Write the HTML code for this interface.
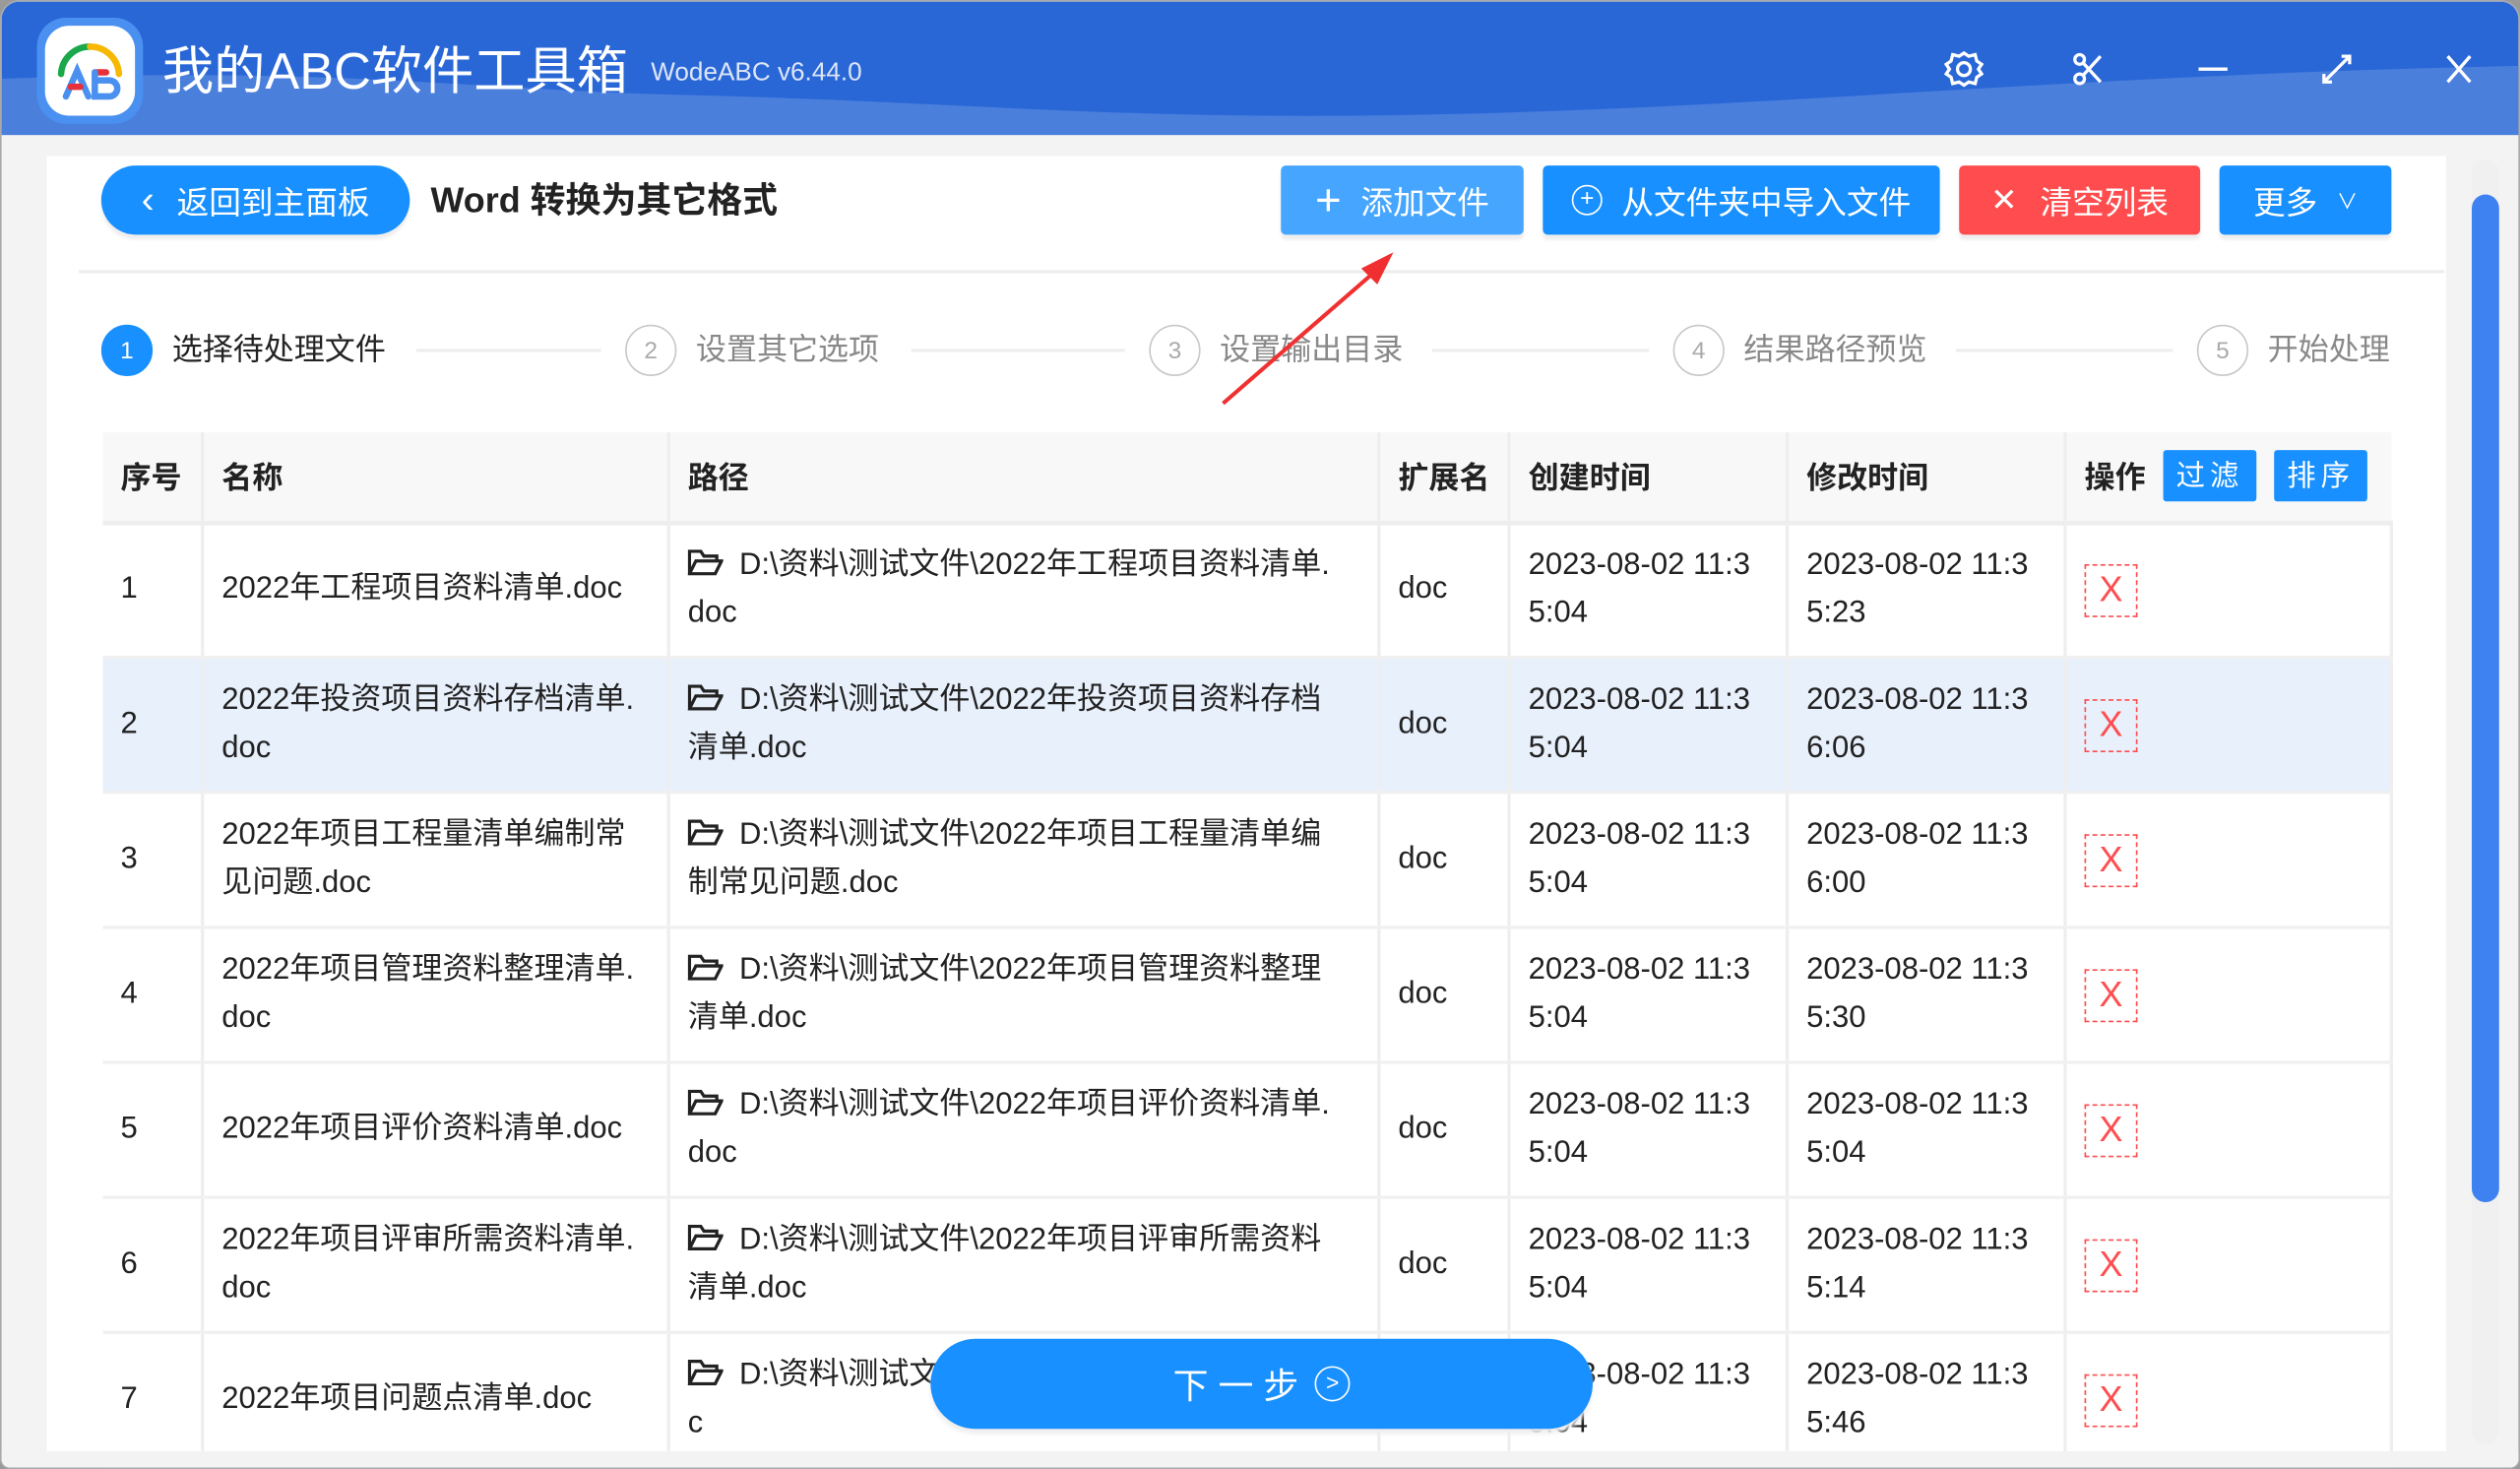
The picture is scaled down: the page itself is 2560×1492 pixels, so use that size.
<!DOCTYPE html>
<html><head><meta charset="utf-8">
<style>
*{margin:0;padding:0;box-sizing:border-box}
html,body{width:2560px;height:1492px;overflow:hidden;background:#9a9a9a}
#s{position:absolute;left:0;top:0;width:1568px;height:914px;transform:scale(1.63265,1.63239);transform-origin:0 0;font-family:"Liberation Sans","Noto Sans CJK SC",sans-serif;color:#222}
.a{position:absolute}
.win{left:0;top:0;width:1568px;height:914px;background:#f3f3f3;border-radius:12px 12px 6px 6px;overflow:hidden;border:1px solid #aaa}
.tb{left:0;top:0;width:1568px;height:83px;background:#2a67d6;overflow:hidden}
.btn{position:absolute;height:43px;color:#fff;font-size:20px;display:flex;align-items:center;justify-content:center;border-radius:3px;box-shadow:0 3px 2px #eee}
.step{position:absolute;top:201px;width:32px;height:32px;border-radius:50%;border:1.5px solid #c8c8c8;color:#aaa;font-size:15px;display:flex;align-items:center;justify-content:center}
.stx{position:absolute;top:205px;font-size:19px;color:#888;line-height:26px}
.ln{position:absolute;top:216px;height:2px;background:#eee}
table{position:absolute;left:63px;top:268px;width:1424px;border-collapse:collapse;font-size:19px;table-layout:fixed}
th{height:56px;background:#f8f8f8;text-align:left;padding-left:11px;font-weight:bold;font-size:19px;border-right:2px solid #eee;border-bottom:3px solid #eee;vertical-align:middle}
td{height:84px;padding-left:11px;border-right:2px solid #eee;border-bottom:2px solid #f0f0f0;line-height:30px;vertical-align:middle;color:#222}
tr.h td{background:#e8f0fc}
.fb{display:inline-block;width:58px;height:32px;background:#1890ff;color:#fff;font-weight:normal;font-size:18px;text-align:center;line-height:32px;border-radius:2px;margin-left:11px;vertical-align:middle;letter-spacing:3px}
.x{display:inline-block;width:33px;height:33px;border:1.5px dashed #ff4d4f;color:#ff4d4f;text-align:center;line-height:30px;font-size:22px}
.fd{display:inline-block;width:22px;height:16px;vertical-align:-1px;margin-right:10px}
</style></head><body><div id="s">
<div class="a win">
 <div class="a tb">
  <svg class="a" style="left:0;top:0" width="1568" height="83"><path d="M0 48 C200 40,300 55,420 58 C600 62,700 75,900 70 C1100 66,1300 45,1568 40 L1568 83 L0 83Z" fill="#4a7fdc"/></svg>
 </div>
 <div class="a" style="left:22px;top:10px;width:66px;height:66px;border-radius:18px;background:#4a90f0"></div>
 <div class="a" style="left:27px;top:15px;width:56px;height:56px;border-radius:15px;background:#fff"></div>
 <svg class="a" style="left:27px;top:15px" width="56" height="56" viewBox="0 0 56 56"><path d="M10 30 A18 18 0 0 1 28 13" stroke="#1aa84a" stroke-width="4" fill="none" stroke-linecap="round"/><path d="M28 13 A18 18 0 0 1 46 30" stroke="#f6b800" stroke-width="4" fill="none" stroke-linecap="round"/><path d="M13 44 L20 28 L27 44" stroke="#4a90f0" stroke-width="4" fill="none" stroke-linecap="round"/><path d="M16 38 L22 38" stroke="#e8303a" stroke-width="4" stroke-linecap="round"/><path d="M31 29 L38 29" stroke="#e8303a" stroke-width="4" stroke-linecap="round"/><path d="M31 29 V44 H40 A5 5 0 0 0 40 34 H31" stroke="#4a90f0" stroke-width="4" fill="none" stroke-linecap="round"/></svg>
 <div class="a" style="left:100px;top:20px;font-size:32px;color:#fff;line-height:46px">我的ABC软件工具箱</div>
 <div class="a" style="left:404px;top:36px;font-size:16px;color:#dce6f8">WodeABC v6.44.0</div>
 <svg class="a" style="left:1205px;top:26px" width="340" height="32" fill="none" stroke="#fff" stroke-width="2">
  <circle cx="16" cy="16" r="4"/><path d="M16 6 L19 8 L23 7 L24 11 L27 13 L25 16 L27 19 L24 21 L23 25 L19 24 L16 26 L13 24 L9 25 L8 21 L5 19 L7 16 L5 13 L8 11 L9 7 L13 8Z"/>
  <circle cx="88" cy="10" r="3"/><circle cx="88" cy="22" r="3"/><path d="M90 12 L101 24 M90 20 L101 8"/>
  <path d="M162 16 H180"/>
  <path d="M240 24 L256 8 M251 8 H256 V13 M240 19 V24 H245"/>
  <path d="M317 8 L331 24 M331 8 L317 24"/>
 </svg>
 <div class="a" style="left:28px;top:96px;width:1493px;height:806px;background:#fff"></div>
 <div class="a" style="left:1537px;top:98px;width:17px;height:800px;border-radius:9px;background:#f0f0f0"></div>
 <div class="a" style="left:1537px;top:120px;width:17px;height:627px;border-radius:9px;background:#3d82f0"></div>
 <div class="a" style="left:48px;top:167px;width:1472px;height:2px;background:#eee"></div>
 <div class="btn" style="left:62px;top:102px;width:192px;border-radius:22px;background:#1890ff"><span style="font-size:24px;margin-right:14px">&#8249;</span>返回到主面板</div>
 <div class="a" style="left:267px;top:110px;font-size:22px;font-weight:bold;line-height:28px">Word 转换为其它格式</div>
 <div class="btn" style="left:796px;top:102px;width:151px;background:#45a5ff"><span style="font-size:28px;margin-right:12px;font-weight:300">+</span>添加文件</div>
 <div class="btn" style="left:959px;top:102px;width:247px;background:#1890ff"><span style="display:inline-block;width:19px;height:19px;border:1.5px solid #fff;border-radius:50%;font-size:15px;line-height:16px;text-align:center;margin-right:12px">+</span>从文件夹中导入文件</div>
 <div class="btn" style="left:1218px;top:102px;width:150px;background:#ff4d4f"><span style="margin-right:14px">✕</span>清空列表</div>
 <div class="btn" style="left:1380px;top:102px;width:107px;background:#1890ff">更多<span style="font-size:13px;margin-left:12px">∨</span></div>
 <div class="step" style="left:62px;border-color:#1890ff;background:#1890ff;color:#fff">1</div>
 <div class="stx" style="left:106px;color:#222">选择待处理文件</div>
 <div class="ln" style="left:258px;width:115px"></div>
 <div class="step" style="left:388px">2</div><div class="stx" style="left:432px">设置其它选项</div>
 <div class="ln" style="left:566px;width:133px"></div>
 <div class="step" style="left:714px">3</div><div class="stx" style="left:758px">设置输出目录</div>
 <div class="ln" style="left:890px;width:135px"></div>
 <div class="step" style="left:1040px">4</div><div class="stx" style="left:1084px">结果路径预览</div>
 <div class="ln" style="left:1216px;width:135px"></div>
 <div class="step" style="left:1366px">5</div><div class="stx" style="left:1410px">开始处理</div>
 <svg class="a" style="left:0;top:0;z-index:5" width="1568" height="300"><path d="M760 250 L858 165" stroke="#f03030" stroke-width="2.5"/><path d="M866 156 L846 166 L856 176Z" fill="#f03030"/></svg>
 <table>
 <colgroup><col style="width:62px"><col style="width:290px"><col style="width:442px"><col style="width:81px"><col style="width:173px"><col style="width:173px"><col style="width:203px"></colgroup>
 <tr><th>序号</th><th>名称</th><th>路径</th><th>扩展名</th><th>创建时间</th><th>修改时间</th><th style="border-right:0"><span style="vertical-align:middle">操作</span><span class="fb">过滤</span><span class="fb">排序</span></th></tr>
 <tr><td>1</td><td>2022年工程项目资料清单.doc</td><td><svg class="fd" viewBox="0 0 22 16"><path d="M1 15 V1 H8 L10 4 H18 V7 M1 15 L5 7 H21 L17 15Z" fill="none" stroke="#222" stroke-width="2"/></svg>D:\资料\测试文件\2022年工程项目资料清单.<br>doc</td><td>doc</td><td>2023-08-02 11:3<br>5:04</td><td>2023-08-02 11:3<br>5:23</td><td><span class="x">X</span></td></tr>
 <tr class="h"><td>2</td><td>2022年投资项目资料存档清单.<br>doc</td><td><svg class="fd" viewBox="0 0 22 16"><path d="M1 15 V1 H8 L10 4 H18 V7 M1 15 L5 7 H21 L17 15Z" fill="none" stroke="#222" stroke-width="2"/></svg>D:\资料\测试文件\2022年投资项目资料存档<br>清单.doc</td><td>doc</td><td>2023-08-02 11:3<br>5:04</td><td>2023-08-02 11:3<br>6:06</td><td><span class="x">X</span></td></tr>
 <tr><td>3</td><td>2022年项目工程量清单编制常<br>见问题.doc</td><td><svg class="fd" viewBox="0 0 22 16"><path d="M1 15 V1 H8 L10 4 H18 V7 M1 15 L5 7 H21 L17 15Z" fill="none" stroke="#222" stroke-width="2"/></svg>D:\资料\测试文件\2022年项目工程量清单编<br>制常见问题.doc</td><td>doc</td><td>2023-08-02 11:3<br>5:04</td><td>2023-08-02 11:3<br>6:00</td><td><span class="x">X</span></td></tr>
 <tr><td>4</td><td>2022年项目管理资料整理清单.<br>doc</td><td><svg class="fd" viewBox="0 0 22 16"><path d="M1 15 V1 H8 L10 4 H18 V7 M1 15 L5 7 H21 L17 15Z" fill="none" stroke="#222" stroke-width="2"/></svg>D:\资料\测试文件\2022年项目管理资料整理<br>清单.doc</td><td>doc</td><td>2023-08-02 11:3<br>5:04</td><td>2023-08-02 11:3<br>5:30</td><td><span class="x">X</span></td></tr>
 <tr><td>5</td><td>2022年项目评价资料清单.doc</td><td><svg class="fd" viewBox="0 0 22 16"><path d="M1 15 V1 H8 L10 4 H18 V7 M1 15 L5 7 H21 L17 15Z" fill="none" stroke="#222" stroke-width="2"/></svg>D:\资料\测试文件\2022年项目评价资料清单.<br>doc</td><td>doc</td><td>2023-08-02 11:3<br>5:04</td><td>2023-08-02 11:3<br>5:04</td><td><span class="x">X</span></td></tr>
 <tr><td>6</td><td>2022年项目评审所需资料清单.<br>doc</td><td><svg class="fd" viewBox="0 0 22 16"><path d="M1 15 V1 H8 L10 4 H18 V7 M1 15 L5 7 H21 L17 15Z" fill="none" stroke="#222" stroke-width="2"/></svg>D:\资料\测试文件\2022年项目评审所需资料<br>清单.doc</td><td>doc</td><td>2023-08-02 11:3<br>5:04</td><td>2023-08-02 11:3<br>5:14</td><td><span class="x">X</span></td></tr>
 <tr><td>7</td><td>2022年项目问题点清单.doc</td><td><svg class="fd" viewBox="0 0 22 16"><path d="M1 15 V1 H8 L10 4 H18 V7 M1 15 L5 7 H21 L17 15Z" fill="none" stroke="#222" stroke-width="2"/></svg>D:\资料\测试文件\2022年项目问题点清单.do<br>c</td><td>doc</td><td>2023-08-02 11:3<br>5:04</td><td>2023-08-02 11:3<br>5:46</td><td><span class="x">X</span></td></tr>
 </table>
 <div class="a" style="left:0;top:902px;width:1568px;height:12px;background:#f3f3f3"></div>
 <div class="a" style="left:578px;top:832px;width:412px;height:56px;border-radius:28px;background:#1890ff;color:#fff;font-size:22px;display:flex;align-items:center;justify-content:center;box-shadow:0 3px 3px #eee;z-index:6">下 一 步 <span style="display:inline-block;width:22px;height:22px;border:1.5px solid #fff;border-radius:50%;font-size:14px;line-height:19px;text-align:center;margin-left:10px">&gt;</span></div>
</div>
</div></body></html>
